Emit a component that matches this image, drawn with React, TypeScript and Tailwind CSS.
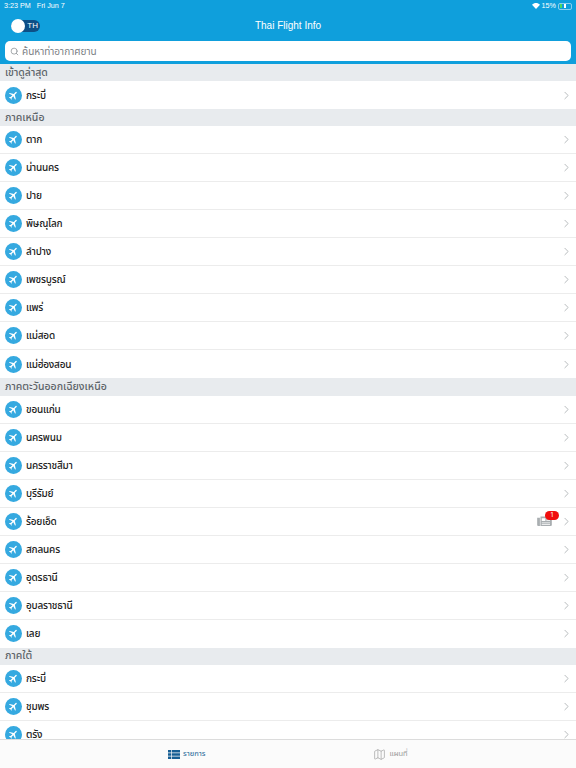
import { Search, ChevronRight, Map as MapIcon } from "lucide-react";

const Plane = () => (
  <span className="flex h-[17px] w-[17px] shrink-0 items-center justify-center rounded-full bg-[#35a9e0]">
    <svg viewBox="0 0 24 24" className="h-[11px] w-[11px] rotate-45" fill="#fff">
      <path d="M21 16v-2l-8-5V3.500a1.500 1.500 0 0 0-3 0V9l-8 5v2l8-2.500V19l-2 1.500V22l3.500-1 3.500 1v-1.500L13 19v-5.500z" />
    </svg>
  </span>
);

const News = () => (
  <svg viewBox="0 0 16 12" className="h-[11px] w-[15px]" fill="#a9aeb1">
    <path d="M0 2h3v9H1.200A1.200 1.200 0 0 1 0 9.800z" />
    <path d="M3.600 0.500h11.200A1.200 1.200 0 0 1 16 1.700v8.100a1.200 1.200 0 0 1-1.200 1.200H3.600z" />
    <path d="M5 2.500h4v3H5zM10 2.500h4v1h-4zM10 4.500h4v1h-4zM5 7h9v1H5zM5 9h9v.8H5z" fill="#fff" />
  </svg>
);

const Row = ({ name, badge, last }: { name: string; badge?: boolean; last?: boolean }) => (
  <div className={`flex h-[28px] shrink-0 items-center bg-white pl-[5px] pr-[3px] ${last ? "" : "border-b border-[#ececec]"}`}>
    <Plane />
    <span className="ml-[4px] flex-1 text-[10px] font-medium tracking-[-0.2px] text-[#222]">{name}</span>
    {badge && (
      <span className="relative mr-[8px] flex">
        <News />
        <span className="absolute -right-[7px] -top-[5px] flex h-[9px] w-[14px] items-center justify-center rounded-full bg-[#f00d0d] text-[6.500px] leading-none text-white">1</span>
      </span>
    )}
    <ChevronRight className="h-[13px] w-[13px] text-[#a8acaf]" strokeWidth={1.500} />
  </div>
);

const Section = ({ title, items }: { title: string; items: { name: string; badge?: boolean }[] }) => (
  <div className="flex shrink-0 flex-col">
    <div className="flex h-[17.200px] items-center bg-[#e8ebee] pl-[5px] text-[10.500px] font-medium text-[#5d6469]">{title}</div>
    {items.map((it, i) => (
      <Row key={i} name={it.name} badge={it.badge} last={i === items.length - 1} />
    ))}
  </div>
);

const names = (s: string) => s.split(" ").map((name) => ({ name }));

export default function App() {
  return (
    <div className="flex h-[768px] w-[576px] flex-col overflow-hidden bg-white font-['Noto_Sans','Noto_Sans_Thai','Liberation_Sans',sans-serif]">
      <header className="h-[64px] shrink-0 bg-[#0f9fdc] text-white">
        <div className="flex h-[10px] items-center justify-between pl-[4px] pr-[4px] pt-[2px] font-['Liberation_Sans',sans-serif] text-[7.200px]">
          <span className="flex gap-[6px]">
            <span>3:23 PM</span>
            <span>Fri Jun 7</span>
          </span>
          <span className="flex items-center gap-[2px]">
            <svg viewBox="0 0 12 9" className="h-[6px] w-[8px]" fill="#fff">
              <path d="M6 9 0 2.700C3.500-.800 8.500-.800 12 2.700z" />
            </svg>
            <span>15%</span>
            <span className="flex h-[7px] w-[14px] items-center gap-[1px] rounded-[2px] border border-white/50 px-[1px]">
              <span className="h-[4px] w-[2px] bg-[#4cd964]" />
              <span className="ml-[1px] h-[4px] w-[2px] bg-white" />
            </span>
          </span>
        </div>
        <div className="flex h-[31px] items-center">
          <div className="relative ml-[11px] flex h-[12px] w-[29px] items-center justify-end rounded-full bg-[#0d4f86] pr-[2px] font-['Liberation_Sans',sans-serif] text-[8px]">
            <span className="absolute left-0 h-[14px] w-[14px] rounded-full bg-white" />
            <span>TH</span>
          </div>
          <div className="flex-1 pr-[40px] text-center font-['Liberation_Sans',sans-serif] text-[10px] font-medium">Thai Flight Info</div>
        </div>
        <div className="mx-[5px] flex h-[20px] items-center gap-[3px] rounded-[5px] bg-white px-[5px] text-[10px] text-[#7c8185]">
          <Search className="h-[9px] w-[9px] text-[#8a8f93]" strokeWidth={2} />
          <span>ค้นหาท่าอากาศยาน</span>
        </div>
      </header>
      <main className="flex min-h-0 flex-1 flex-col overflow-hidden">
        <Section title="เข้าดูล่าสุด" items={names("กระบี่")} />
        <Section title="ภาคเหนือ" items={names("ตาก น่านนคร ปาย พิษณุโลก ลำปาง เพชรบูรณ์ แพร่ แม่สอด แม่ฮ่องสอน")} />
        <Section
          title="ภาคตะวันออกเฉียงเหนือ"
          items={[
            ...names("ขอนแก่น นครพนม นครราชสีมา บุรีรัมย์"),
            { name: "ร้อยเอ็ด", badge: true },
            ...names("สกลนคร อุดรธานี อุบลราชธานี เลย"),
          ]}
        />
        <Section title="ภาคใต้" items={names("กระบี่ ชุมพร ตรัง")} />
      </main>
      <nav className="flex h-[29px] shrink-0 items-center gap-[168px] border-t border-[#dcdcdc] bg-[#fbfbfb] pl-[168px] text-[7.500px]">
        <div className="flex items-center gap-[3px] text-[#175f94]">
          <svg viewBox="0 0 12 9" className="h-[9px] w-[12px]" fill="#175f94">
            <path d="M0 0h3v2.500H0zM3.700 0H12v2.500H3.700zM0 3.250h3v2.500H0zM3.700 3.250H12v2.500H3.700zM0 6.500h3V9H0zM3.700 6.500H12V9H3.700z" />
          </svg>
          <span>รายการ</span>
        </div>
        <div className="flex items-center gap-[3px] text-[#9a9a9a]">
          <MapIcon className="h-[13px] w-[13px]" strokeWidth={1.200} />
          <span>แผนที่</span>
        </div>
      </nav>
    </div>
  );
}
